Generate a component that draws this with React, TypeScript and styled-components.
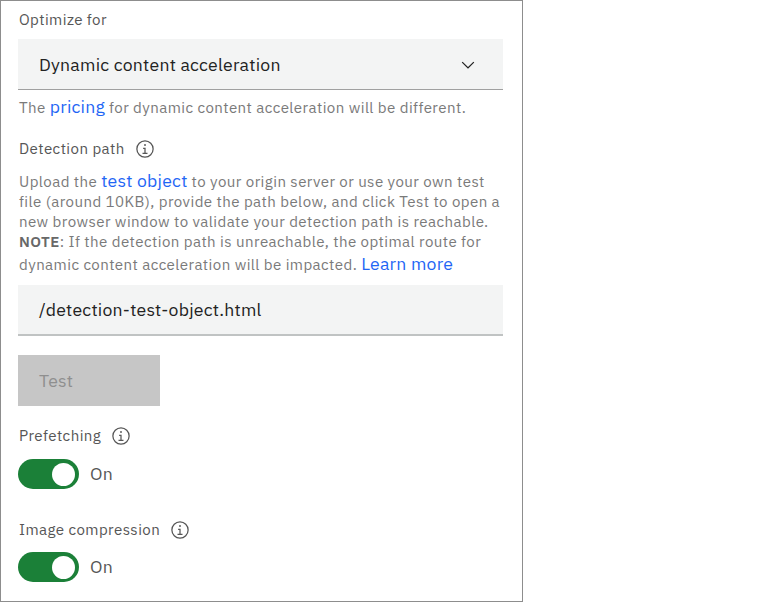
import React from 'react';
import styled, { createGlobalStyle } from 'styled-components';

const GlobalStyle = createGlobalStyle`
  * { box-sizing: border-box; }
  body { margin: 0; background: #fff; }
`;

const Panel = styled.main`
  width: 523px;
  height: 602px;
  padding: 9px 19px 0 17px;
  border: 1px solid #8d8d8d;
  display: flex;
  flex-direction: column;
  overflow: hidden;
  background: #fff;
  color: #565656;
  font-family: 'IBM Plex Sans', Roboto, sans-serif;
  font-size: 15.1px;
  letter-spacing: 0.42px;
`;

const LabelRow = styled.div<{ $top?: number }>`
  height: 20px;
  flex: none;
  margin-top: ${(p) => p.$top ?? 0}px;
  padding-left: 1px;
  display: flex;
  align-items: center;
  gap: 10px;
  line-height: 20px;
`;

const Field = styled.div<{ $top: number; $line: number; $border: string }>`
  height: 51px;
  flex: none;
  margin-top: ${(p) => p.$top}px;
  padding: 0 25px 0 21px;
  display: flex;
  align-items: center;
  justify-content: space-between;
  background: #f3f4f4;
  border-bottom: ${(p) => p.$line}px solid ${(p) => p.$border};
  color: #222;
  font-size: 17.65px;
  line-height: 22px;
  letter-spacing: 0.23px;
`;

const FieldValue = styled.span`
  padding-top: 2px;
`;

const Copy = styled.div<{ $top: number }>`
  margin-top: ${(p) => p.$top}px;
  padding-left: 1px;
  color: #7a7a7a;
  white-space: nowrap;
`;

const Line = styled.div<{ $height?: number }>`
  height: ${(p) => p.$height ?? 20}px;
  display: flex;
  align-items: baseline;
  line-height: 20px;
  white-space: pre;
`;

const Link = styled.a`
  color: #1f66f5;
  font-size: 17.65px;
  letter-spacing: 0.22px;
`;

const Strong = styled.strong`
  font-weight: 600;
  color: #686868;
`;

const TestButton = styled.button`
  width: 142px;
  height: 51px;
  flex: none;
  margin-top: 19px;
  padding: 0 0 0 21px;
  border: 0;
  background: #c6c6c6;
  color: #8f8f8f;
  font: inherit;
  font-size: 17.65px;
  letter-spacing: 0.2px;
  text-align: left;
`;

const ToggleRow = styled.div<{ $top: number }>`
  height: 30px;
  flex: none;
  margin-top: ${(p) => p.$top}px;
  display: flex;
  align-items: center;
  gap: 11px;
  font-size: 17.65px;
  line-height: 22px;
  letter-spacing: 0.2px;
`;

const Track = styled.span`
  width: 61px;
  height: 30px;
  padding-right: 4px;
  border-radius: 15px;
  display: flex;
  align-items: center;
  justify-content: flex-end;
  background: #1b8038;
`;

const Knob = styled.span`
  width: 23px;
  height: 23px;
  border-radius: 50%;
  background: #fff;
`;

const ChevronIcon = styled.svg`
  margin-top: 2px;
`;

const InfoIcon = () => (
  <svg width="20" height="20" viewBox="0 0 32 32" fill="#565656">
    <path d="M17 22V14h-4v2h2v6h-3v2h8v-2zM16 8a1.5 1.5 0 1 0 1.5 1.5A1.5 1.5 0 0 0 16 8z" />
    <path d="M16 30a14 14 0 1 1 14-14 14 14 0 0 1-14 14zm0-26a12 12 0 1 0 12 12A12 12 0 0 0 16 4z" />
  </svg>
);

const Chevron = () => (
  <ChevronIcon width="20" height="20" viewBox="0 0 16 16" fill="#222">
    <path d="M8 11L3 6l.7-.7L8 9.6l4.3-4.3.7.7z" />
  </ChevronIcon>
);

const Toggle = ({ top }: { top: number }) => (
  <ToggleRow $top={top} role="switch" aria-checked="true">
    <Track><Knob /></Track>
    <span>On</span>
  </ToggleRow>
);

export default function App() {
  return (
    <>
      <GlobalStyle />
      <Panel>
        <LabelRow>Optimize for</LabelRow>
        <Field $top={9} $line={1} $border="#a0a0a0">
          <FieldValue>Dynamic content acceleration</FieldValue>
          <Chevron />
        </Field>
        <Copy $top={7}>
          <Line>
            {'The '}<Link>pricing</Link>{' for dynamic content acceleration will be different.'}
          </Line>
        </Copy>
        <LabelRow $top={22}>Detection path<InfoIcon /></LabelRow>
        <Copy $top={12}>
          <Line $height={21}>{'Upload the '}<Link>test object</Link>{' to your origin server or use your own test'}</Line>
          <Line>file (around 10KB), provide the path below, and click Test to open a</Line>
          <Line>new browser window to validate your detection path is reachable.</Line>
          <Line $height={22}><Strong>NOTE</Strong>: If the detection path is unreachable, the optimal route for</Line>
          <Line>{'dynamic content acceleration will be impacted. '}<Link>Learn more</Link></Line>
        </Copy>
        <Field $top={11} $line={2} $border="#c0c3c3"><span>/detection-test-object.html</span></Field>
        <TestButton disabled>Test</TestButton>
        <LabelRow $top={20}>Prefetching<InfoIcon /></LabelRow>
        <Toggle top={13} />
        <LabelRow $top={31}>Image compression<InfoIcon /></LabelRow>
        <Toggle top={12} />
      </Panel>
    </>
  );
}
